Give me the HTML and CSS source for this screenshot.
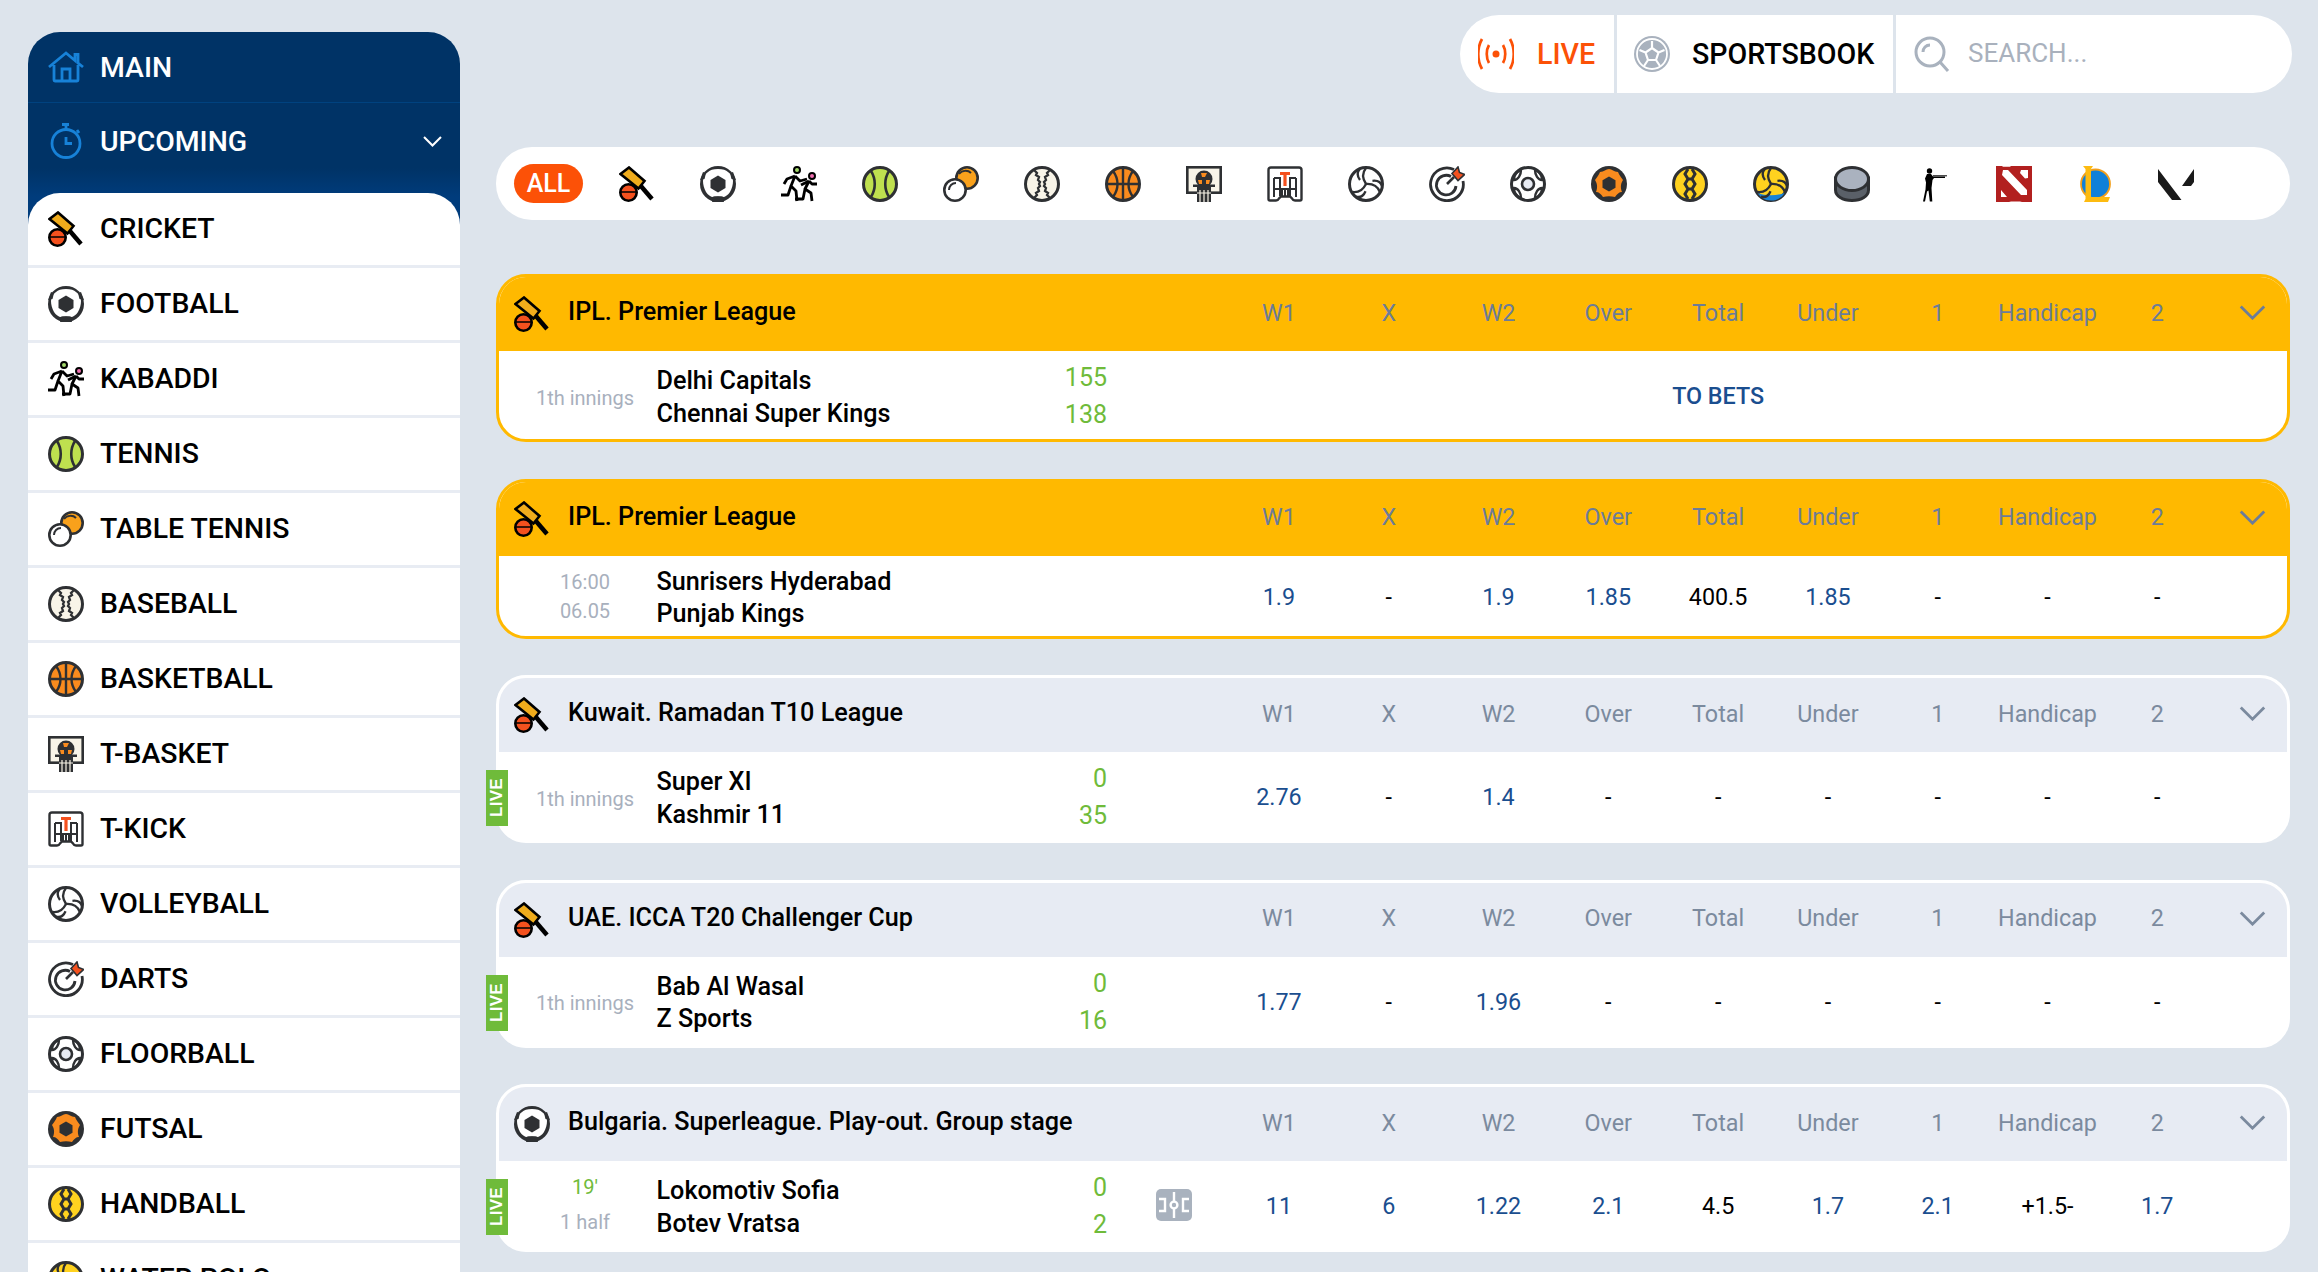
FILE: index.html
```html
<!DOCTYPE html>
<html lang="en">
<head>
<meta charset="utf-8">
<title>Sportsbook</title>
<link rel="stylesheet" href="styles.css">
</head>
<body>
<svg class="defs" width="0" height="0" aria-hidden="true">
  <symbol id="i-cricket" viewBox="0 0 36 36">
    <path d="M33 33 21 19" fill="none" stroke="#000" stroke-width="4.5"/>
    <path d="M10 1.500 25.500 15 19.500 22.500 1.500 8z" fill="#f0ac1c" stroke="#000" stroke-width="2.600"/>
    <circle cx="9.500" cy="26.500" r="8.200" fill="#f4511e" stroke="#000" stroke-width="2.600"/>
    <path d="M2 26h15" stroke="#000" stroke-width="1.500"/>
  </symbol>
  <symbol id="i-football" viewBox="0 0 36 36">
    <circle cx="18" cy="18" r="18" fill="#2e3033"/>
    <path d="M18 3c5 0 8 1 10 3 3 2 5 5 5 9 0 4-1 7-3 11-2 3-4 4-6 5-4-1-8-1-12 0-2-1-4-2-6-5-2-4-3-7-3-11 0-4 2-7 5-9 2-2 5-3 10-3z" fill="#fff"/>
    <path d="M18 9.500 25.500 14V22L18 26.500 10.500 22V14z" fill="#2e3033"/>
    <path d="M12 36l1.500-5.500h9L24 36zM0 14l4.500-1 1.500-6-3-1zM36 14l-4.500-1-1.500-6 3-1z" fill="#2e3033"/>
  </symbol>
  <symbol id="i-kabaddi" viewBox="0 0 36 36">
    <g fill="none" stroke="#000" stroke-width="2.800" stroke-linejoin="round">
      <circle cx="16" cy="4" r="3" fill="#a3d96b" stroke-width="2"/>
      <circle cx="31" cy="10" r="3" fill="#f06fb0" stroke-width="2"/>
      <path d="M14 10 10 20 15 25 16 35M10 20 7 29H0M14 10 6 13 3 18M14 10 19 15 26 13"/>
      <path d="M28 15 24 23 30 27 31 35M24 23 22 33H14M28 15 20 19M28 15 31 18H36"/>
    </g>
  </symbol>
  <symbol id="i-tennis" viewBox="0 0 36 36">
    <circle cx="18" cy="18" r="16.500" fill="#bfe04f" stroke="#2e3033" stroke-width="3"/>
    <path d="M9 5c5 8 5 18 0 26M27 5c-5 8-5 18 0 26" fill="none" stroke="#2e3033" stroke-width="2.600"/>
  </symbol>
  <symbol id="i-tabletennis" viewBox="0 0 36 36">
    <circle cx="24" cy="12" r="10.700" fill="#f9a11b" stroke="#2e3033" stroke-width="2.600"/>
    <path d="M16 8c3-4 9-4 12-1" fill="none" stroke="#2e3033" stroke-width="2"/>
    <circle cx="12" cy="24" r="10.700" fill="#fff" stroke="#2e3033" stroke-width="2.600"/>
    <path d="M6 24c0-4 3-7 7-7" fill="none" stroke="#2e3033" stroke-width="2"/>
  </symbol>
  <symbol id="i-baseball" viewBox="0 0 36 36">
    <circle cx="18" cy="18" r="16.500" fill="#f8f4e8" stroke="#2e3033" stroke-width="3"/>
    <path d="M10 4l3 3-1 2 3 2-1 3 2 2-1 2 1 2-2 2 1 3-3 2 1 2-3 3M26 4l-3 3 1 2-3 2 1 3-2 2 1 2-1 2 2 2-1 3 3 2-1 2 3 3" fill="none" stroke="#2e3033" stroke-width="2.300"/>
  </symbol>
  <symbol id="i-basketball" viewBox="0 0 36 36">
    <circle cx="18" cy="18" r="16.500" fill="#f98b1e" stroke="#2e3033" stroke-width="3"/>
    <path d="M18 2v32M2 18h32M8 5c6 8 6 18 0 26M28 5c-6 8-6 18 0 26" fill="none" stroke="#2e3033" stroke-width="2.400"/>
  </symbol>
  <symbol id="i-tbasket" viewBox="0 0 36 36">
    <rect x="1.300" y="1.300" width="33.400" height="25.400" fill="#f8f4e8" stroke="#2e3033" stroke-width="2.600"/>
    <circle cx="18" cy="13" r="8.500" fill="#2e3033"/>
    <path d="M15 7h6l-2 4h-3zM12 14h4v4h-3zM20 14h4l-1 4h-3z" fill="#f98b1e"/>
    <rect x="7" y="18.500" width="22" height="2.500" fill="#2e3033"/>
    <path d="M11 20h14v16H11z" fill="#2e3033"/>
    <path d="M14 24v12M18 24v12M22 24v12M11 27h14" stroke="#f8f4e8" stroke-width="1.200"/>
  </symbol>
  <symbol id="i-tkick" viewBox="0 0 36 36">
    <path d="M1.500 33V4q0-2.500 2.500-2.500h28q2.500 0 2.500 2.500v29q0 1.500-1.500 1.500h-5q-2 0-3-2l-2-2h-9l-2 2q-1 2-3 2H3q-1.500 0-1.500-1.500z" fill="#fff" stroke="#2e3033" stroke-width="2.400"/>
    <path d="M7 12h6v18M29 12h-6v18M7 12v19M29 12v19M7 23h22M15 24v7M18 24v7M21 24v7" fill="none" stroke="#2e3033" stroke-width="2"/>
    <path d="M13 6h10v3h-3.400v11h-3.200V9H13z" fill="#f4511e"/>
  </symbol>
  <symbol id="i-volleyball" viewBox="0 0 36 36">
    <circle cx="18" cy="18" r="16.500" fill="#fff" stroke="#2e3033" stroke-width="3"/>
    <g fill="none" stroke="#2e3033" stroke-width="2.300">
      <path d="M18 18C14 12 14 7 18 2M12 14C9 10 9 6 12 3"/>
      <path transform="rotate(120 18 18)" d="M18 18C14 12 14 7 18 2M12 14C9 10 9 6 12 3"/>
      <path transform="rotate(240 18 18)" d="M18 18C14 12 14 7 18 2M12 14C9 10 9 6 12 3"/>
    </g>
  </symbol>
  <symbol id="i-darts" viewBox="0 0 36 36">
    <path d="M25 3.500A16.400 16.400 0 1 0 34 15" fill="none" stroke="#2e3033" stroke-width="2.800"/>
    <path d="M22 10.500A9.800 9.800 0 1 0 27 20" fill="none" stroke="#2e3033" stroke-width="2.800"/>
    <path d="M18 18 25 11" stroke="#2e3033" stroke-width="2.600"/>
    <path d="M23 7.500 29 1l1.500 5.500 5 2-6.500 6z" fill="#f4511e" stroke="#2e3033" stroke-width="1.600"/>
  </symbol>
  <symbol id="i-floorball" viewBox="0 0 36 36">
    <circle cx="18" cy="18" r="16.500" fill="#fff" stroke="#2e3033" stroke-width="3"/>
    <circle cx="18" cy="18" r="6" fill="#e7ebf3" stroke="#2e3033" stroke-width="2.600"/>
    <g fill="none" stroke="#2e3033" stroke-width="2.400">
      <path d="M25 4c5 2 7 6 7 10-4 0-7-5-7-10z"/>
      <path d="M11 4c-5 2-7 6-7 10 4 0 7-5 7-10z"/>
      <path d="M25 32c5-2 7-6 7-10-4 0-7 5-7 10z"/>
      <path d="M11 32c-5-2-7-6-7-10 4 0 7 5 7 10z"/>
    </g>
  </symbol>
  <symbol id="i-futsal" viewBox="0 0 36 36">
    <circle cx="18" cy="18" r="18" fill="#2e3033"/>
    <path d="M18 3c3 0 5 3 9 3 1 3 3 5 5 8-2 3-3 7-1 12-3 0-5 2-7 5-4-1-8-1-12 0-2-3-4-5-7-5 2-5 1-9-1-12 2-3 4-5 5-8 4 0 6-3 9-3z" fill="#f98b1e"/>
    <path d="M18 10.500 24.500 14.250V21.750L18 25.500 11.500 21.750V14.250z" fill="#2e3033"/>
  </symbol>
  <symbol id="i-handball" viewBox="0 0 36 36">
    <circle cx="18" cy="18" r="16.500" fill="#ffd21f" stroke="#2e3033" stroke-width="3"/>
    <path d="M13 18l3-5h4l3 5-3 5h-4zM16 13l-3-5 3-5M20 13l3-5-3-5M16 23l-3 5 3 5M20 23l3 5-3 5" fill="none" stroke="#2e3033" stroke-width="3"/>
  </symbol>
  <symbol id="i-waterpolo" viewBox="0 0 36 36">
    <circle cx="18" cy="18" r="16.500" fill="#ffd21f" stroke="#2e3033" stroke-width="3"/>
    <path d="M4.500 27c8 3 19 3 27 0-2 4-7 7.500-13.500 7.500S7 31 4.500 27z" fill="#1782d8"/>
    <g fill="none" stroke="#2e3033" stroke-width="2.300">
      <path d="M18 18C14 12 14 7 18 2M12 14C9 10 9 6 12 3"/>
      <path transform="rotate(120 18 18)" d="M18 18C14 12 14 7 18 2M12 14C9 10 9 6 12 3"/>
      <path transform="rotate(240 18 18)" d="M18 18C14 12 14 7 18 2M12 14C9 10 9 6 12 3"/>
    </g>
  </symbol>
  <symbol id="i-hockey" viewBox="0 0 36 36">
    <path d="M1.500 12v12c0 6 7 10.500 16.500 10.500S34.500 30 34.500 24V12z" fill="#5a6068" stroke="#2e3033" stroke-width="3"/>
    <ellipse cx="18" cy="13" rx="16.500" ry="11.500" fill="#aab2bf" stroke="#2e3033" stroke-width="3"/>
  </symbol>
  <symbol id="i-cs" viewBox="0 0 36 36">
    <circle cx="14.500" cy="5" r="2.700" fill="#000"/>
    <path d="M12 8h4l2 2.500h12v1.500H19l-1.500 2-1 8 .8 13.500H14.800l-1.300-11-1.500 1-2 10H8l2.500-12 .5-7-1-4z" fill="#000"/>
    <path d="M18 9.800h14" stroke="#000" stroke-width="1"/>
  </symbol>
  <symbol id="i-dota" viewBox="0 0 36 36">
    <path d="M0 0h6l1 .7h7l1-.7h21v36H26l-2-.6h-9l-2 .6H0z" fill="#b2201f"/>
    <path d="M7 4h5l19 20v5h-6L6 9z M25 4h7v8l-3 .5-5-5.500zM5 24l6 7H5z" fill="#fff"/>
  </symbol>
  <symbol id="i-lol" viewBox="0 0 36 36">
    <circle cx="18.500" cy="18" r="14.500" fill="#1080d8" stroke="#f29f1b" stroke-width="1.800"/>
    <path d="M6 0h10l-2 3v28h19l-2 5H7l1.500-3V3z" fill="#fdbb10"/>
  </symbol>
  <symbol id="i-val" viewBox="0 0 36 36">
    <path d="M0 3v13l14 18h9.500zM36 3 24 20h9l3-4z" fill="#1a1a1a"/>
  </symbol>
  <symbol id="i-home" viewBox="0 0 36 30">
    <path d="M1 15 18 1l9 7.500V2.500h3v8.500l5 4M6 13v15q0 1 1 1h22q1 0 1-1V13M14 29V17h8v12" fill="none" stroke="#1782d8" stroke-width="2.800"/>
  </symbol>
  <symbol id="i-timer" viewBox="0 0 32 36">
    <path d="M12 1.500h7M16 1.500v5M27 7l2 3" fill="none" stroke="#1782d8" stroke-width="2.800"/>
    <circle cx="16" cy="20.500" r="14" fill="none" stroke="#1782d8" stroke-width="2.800"/>
    <path d="M16 14v6.500h6" fill="none" stroke="#1782d8" stroke-width="2.800"/>
  </symbol>
  <symbol id="i-live" viewBox="0 0 36 36">
    <circle cx="18" cy="18" r="3.500" fill="#fc5107"/>
    <path d="M11 9c-3 5-3 13 0 18M25 9c3 5 3 13 0 18M4 3c-5 9-5 21 0 30M32 3c5 9 5 21 0 30" fill="none" stroke="#fc5107" stroke-width="2.700"/>
  </symbol>
  <symbol id="i-ball" viewBox="0 0 36 36">
    <circle cx="18" cy="18" r="18" fill="#a9b2be"/>
    <path d="M18 12 24.500 16.500 22 24H14L11.500 16.500zM18 12V5M24.500 16.500l6-2.500M22 24l4 6M14 24l-4 6M11.500 16.500l-6-2.500" fill="#a9b2be" stroke="#fff" stroke-width="2.200"/>
    <circle cx="18" cy="18" r="15" fill="none" stroke="#fff" stroke-width="1.800"/>
  </symbol>
  <symbol id="i-search" viewBox="0 0 36 36">
    <circle cx="16" cy="16" r="14" fill="none" stroke="#a9b2be" stroke-width="3"/>
    <path d="M9 16c0-4 3-7 7-7M26 26l8 9" fill="none" stroke="#a9b2be" stroke-width="3"/>
  </symbol>
  <symbol id="i-field" viewBox="0 0 36 32">
    <rect width="36" height="32" rx="5" fill="#a9b2be"/>
    <path d="M18 3v26M3 10h6v12H3M33 10h-6v12h6" fill="none" stroke="#fff" stroke-width="2.400"/>
    <circle cx="18" cy="16" r="3.400" fill="#a9b2be" stroke="#fff" stroke-width="2.400"/>
  </symbol>
  <symbol id="i-chev" viewBox="0 0 28 16">
    <path d="M1.500 1.500 14 14 26.500 1.500" fill="none" stroke="currentColor" stroke-width="3"/>
  </symbol>
</svg>

<div class="page">
  <aside class="sidebar">
    <div class="nav-row nav-main"><svg class="ico"><use href="#i-home"/></svg><span class="nav-label">MAIN</span></div>
    <div class="nav-row nav-up"><svg class="ico"><use href="#i-timer"/></svg><span class="nav-label">UPCOMING</span><svg class="nav-chev"><use href="#i-chev"/></svg></div>
    <ul class="sports">
      <li><svg class="ico"><use href="#i-cricket"/></svg><span>CRICKET</span></li>
      <li><svg class="ico"><use href="#i-football"/></svg><span>FOOTBALL</span></li>
      <li><svg class="ico"><use href="#i-kabaddi"/></svg><span>KABADDI</span></li>
      <li><svg class="ico"><use href="#i-tennis"/></svg><span>TENNIS</span></li>
      <li><svg class="ico"><use href="#i-tabletennis"/></svg><span>TABLE TENNIS</span></li>
      <li><svg class="ico"><use href="#i-baseball"/></svg><span>BASEBALL</span></li>
      <li><svg class="ico"><use href="#i-basketball"/></svg><span>BASKETBALL</span></li>
      <li><svg class="ico"><use href="#i-tbasket"/></svg><span>T-BASKET</span></li>
      <li><svg class="ico"><use href="#i-tkick"/></svg><span>T-KICK</span></li>
      <li><svg class="ico"><use href="#i-volleyball"/></svg><span>VOLLEYBALL</span></li>
      <li><svg class="ico"><use href="#i-darts"/></svg><span>DARTS</span></li>
      <li><svg class="ico"><use href="#i-floorball"/></svg><span>FLOORBALL</span></li>
      <li><svg class="ico"><use href="#i-futsal"/></svg><span>FUTSAL</span></li>
      <li><svg class="ico"><use href="#i-handball"/></svg><span>HANDBALL</span></li>
      <li><svg class="ico"><use href="#i-waterpolo"/></svg><span>WATER POLO</span></li>
    </ul>
  </aside>

  <main class="main">
    <div class="topbar">
      <div class="top-live"><svg class="ico"><use href="#i-live"/></svg><span>LIVE</span></div>
      <div class="top-book"><svg class="ico"><use href="#i-ball"/></svg><span>SPORTSBOOK</span></div>
      <div class="top-search"><svg class="ico"><use href="#i-search"/></svg><span>SEARCH...</span></div>
    </div>

    <div class="filters">
      <span class="all">ALL</span>
      <svg class="ico"><use href="#i-cricket"/></svg>
      <svg class="ico"><use href="#i-football"/></svg>
      <svg class="ico"><use href="#i-kabaddi"/></svg>
      <svg class="ico"><use href="#i-tennis"/></svg>
      <svg class="ico"><use href="#i-tabletennis"/></svg>
      <svg class="ico"><use href="#i-baseball"/></svg>
      <svg class="ico"><use href="#i-basketball"/></svg>
      <svg class="ico"><use href="#i-tbasket"/></svg>
      <svg class="ico"><use href="#i-tkick"/></svg>
      <svg class="ico"><use href="#i-volleyball"/></svg>
      <svg class="ico"><use href="#i-darts"/></svg>
      <svg class="ico"><use href="#i-floorball"/></svg>
      <svg class="ico"><use href="#i-futsal"/></svg>
      <svg class="ico"><use href="#i-handball"/></svg>
      <svg class="ico"><use href="#i-waterpolo"/></svg>
      <svg class="ico"><use href="#i-hockey"/></svg>
      <svg class="ico"><use href="#i-cs"/></svg>
      <svg class="ico"><use href="#i-dota"/></svg>
      <svg class="ico"><use href="#i-lol"/></svg>
      <svg class="ico"><use href="#i-val"/></svg>
    </div>

    <section class="card card-hot">
      <header class="head"><svg class="ico"><use href="#i-cricket"/></svg><h2>IPL. Premier League</h2>
        <div class="cols"><span>W1</span><span>X</span><span>W2</span><span>Over</span><span>Total</span><span>Under</span><span>1</span><span>Handicap</span><span>2</span></div>
        <svg class="chev"><use href="#i-chev"/></svg></header>
      <div class="match">
        <div class="time time-one">1th innings</div>
        <div class="teams"><div>Delhi Capitals</div><div>Chennai Super Kings</div></div>
        <div class="score"><div>155</div><div>138</div></div>
        <div class="field-slot"></div>
        <div class="cols odds"><a class="to-bets">TO BETS</a></div>
        <div class="chev-slot"></div>
      </div>
    </section>

    <section class="card card-hot card-short">
      <header class="head"><svg class="ico"><use href="#i-cricket"/></svg><h2>IPL. Premier League</h2>
        <div class="cols"><span>W1</span><span>X</span><span>W2</span><span>Over</span><span>Total</span><span>Under</span><span>1</span><span>Handicap</span><span>2</span></div>
        <svg class="chev"><use href="#i-chev"/></svg></header>
      <div class="match">
        <div class="time"><div>16:00</div><div>06.05</div></div>
        <div class="teams"><div>Sunrisers Hyderabad</div><div>Punjab Kings</div></div>
        <div class="score"></div>
        <div class="field-slot"></div>
        <div class="cols odds"><span class="o">1.9</span><span>-</span><span class="o">1.9</span><span class="o">1.85</span><span>400.5</span><span class="o">1.85</span><span>-</span><span>-</span><span>-</span></div>
        <div class="chev-slot"></div>
      </div>
    </section>

    <section class="card">
      <header class="head"><svg class="ico"><use href="#i-cricket"/></svg><h2>Kuwait. Ramadan T10 League</h2>
        <div class="cols"><span>W1</span><span>X</span><span>W2</span><span>Over</span><span>Total</span><span>Under</span><span>1</span><span>Handicap</span><span>2</span></div>
        <svg class="chev"><use href="#i-chev"/></svg></header>
      <div class="match">
        <b class="live">LIVE</b>
        <div class="time time-one">1th innings</div>
        <div class="teams"><div>Super XI</div><div>Kashmir 11</div></div>
        <div class="score"><div>0</div><div>35</div></div>
        <div class="field-slot"></div>
        <div class="cols odds"><span class="o">2.76</span><span>-</span><span class="o">1.4</span><span>-</span><span>-</span><span>-</span><span>-</span><span>-</span><span>-</span></div>
        <div class="chev-slot"></div>
      </div>
    </section>

    <section class="card">
      <header class="head"><svg class="ico"><use href="#i-cricket"/></svg><h2>UAE. ICCA T20 Challenger Cup</h2>
        <div class="cols"><span>W1</span><span>X</span><span>W2</span><span>Over</span><span>Total</span><span>Under</span><span>1</span><span>Handicap</span><span>2</span></div>
        <svg class="chev"><use href="#i-chev"/></svg></header>
      <div class="match">
        <b class="live">LIVE</b>
        <div class="time time-one">1th innings</div>
        <div class="teams"><div>Bab Al Wasal</div><div>Z Sports</div></div>
        <div class="score"><div>0</div><div>16</div></div>
        <div class="field-slot"></div>
        <div class="cols odds"><span class="o">1.77</span><span>-</span><span class="o">1.96</span><span>-</span><span>-</span><span>-</span><span>-</span><span>-</span><span>-</span></div>
        <div class="chev-slot"></div>
      </div>
    </section>

    <section class="card">
      <header class="head"><svg class="ico"><use href="#i-football"/></svg><h2>Bulgaria. Superleague. Play-out. Group stage</h2>
        <div class="cols"><span>W1</span><span>X</span><span>W2</span><span>Over</span><span>Total</span><span>Under</span><span>1</span><span>Handicap</span><span>2</span></div>
        <svg class="chev"><use href="#i-chev"/></svg></header>
      <div class="match">
        <b class="live">LIVE</b>
        <div class="time time-live"><div class="minute">19'</div><div>1 half</div></div>
        <div class="teams"><div>Lokomotiv Sofia</div><div>Botev Vratsa</div></div>
        <div class="score"><div>0</div><div>2</div></div>
        <div class="field-slot"><svg class="field"><use href="#i-field"/></svg></div>
        <div class="cols odds"><span class="o">11</span><span class="o">6</span><span class="o">1.22</span><span class="o">2.1</span><span>4.5</span><span class="o">1.7</span><span class="o">2.1</span><span>+1.5-</span><span class="o">1.7</span></div>
        <div class="chev-slot"></div>
      </div>
    </section>
  </main>
</div>
</body>
</html>
```

FILE: styles.css
```css
* { box-sizing: border-box; }
html, body { margin: 0; height: 100%; overflow: hidden; }
body {
  background: #dde4ec;
  color: #000;
  font-family: Roboto, "Liberation Sans", sans-serif;
}
.defs { position: absolute; }
.ico { width: 36px; height: 36px; flex: none; display: block; }

.page { display: flex; align-items: flex-start; padding-left: 28px; height: 1272px; overflow: hidden; }

/* Sidebar */
.sidebar {
  width: 432px;
  flex: none;
  margin-top: 32px;
  border-radius: 32px 32px 0 0;
  background: linear-gradient(#003366 0, #003366 136px, #003c7c 165px);
  color: #fff;
}
.nav-row { display: flex; align-items: center; padding-left: 20px; font-size: 28.4px; font-weight: 500; }
.nav-row .ico { margin-right: 16px; }
.nav-main { height: 71px; border-bottom: 1px solid #00427f; }
.nav-up { height: 76px; margin-bottom: 14px; }
.nav-chev { width: 19px; height: 11px; margin-left: auto; margin-right: 18px; color: #fff; }
.sports { list-style: none; margin: 0; padding: 0; background: #fff; border-radius: 32px 32px 0 0; color: #000; }
.sports li {
  display: flex; align-items: center;
  height: 75px; padding-left: 20px;
  border-bottom: 3px solid #e8ecf3;
  font-size: 28.4px; font-weight: 500;
}
.sports li .ico { margin-right: 16px; }
.sports li span { padding-bottom: 2px; }

/* Main column */
.main { width: 1794px; margin-left: 36px; padding-top: 15px; flex: none; }

.topbar {
  display: flex;
  width: 832px; height: 78px;
  margin-left: auto; margin-right: -2px;
  background: #fff;
  border-radius: 39px;
  overflow: hidden;
  font-size: 28.6px; font-weight: 500;
}
.topbar > div { display: flex; align-items: center; }
.top-live { width: 157px; padding-left: 18px; color: #fc5107; border-right: 3px solid #dde4ec; }
.top-live .ico { margin-right: 23px; }
.top-book { width: 279px; padding-left: 17px; border-right: 3px solid #dde4ec; }
.top-book .ico { margin-right: 22px; }
.top-search { flex: 1; padding-left: 18px; color: #a9b1bd; font-weight: 400; font-size: 26px; }
.top-search span { padding-bottom: 2px; }
.top-search .ico { margin-right: 18px; }

.filters {
  display: flex; align-items: center;
  height: 73px;
  margin-top: 54px;
  padding-left: 18px;
  gap: 45px;
  background: #fff;
  border-radius: 36px;
}
.all {
  width: 69px; height: 39px; margin-right: -9px;
  display: flex; align-items: center; justify-content: center;
  background: #fc5107; color: #fff;
  border-radius: 20px;
  font-size: 25px; font-weight: 500;
}

/* Cards */
.card {
  margin-top: 36.5px;
  height: 168px;
  border: 3px solid #fff;
  border-radius: 30px;
  background: #fff;
}
.filters + .card { margin-top: 54px; }
.card-short { height: 160px; }
.card-hot { border-color: #ffb900; }
.head {
  display: flex; align-items: center;
  height: 74px;
  padding-left: 15px;
  background: #e7ebf3;
  border-radius: 27px 27px 0 0;
  color: #7b8a9e;
}
.card-hot .head { background: #ffb900; color: #6c7c98; }
.head h2 { flex: 1; margin: 0 0 0 18px; padding-bottom: 5px; color: #000; font-size: 25.2px; font-weight: 500; white-space: nowrap; }
.cols { display: grid; grid-template-columns: repeat(9, 109.8px); width: 988.2px; flex: none; text-align: center; font-size: 23.3px; }
.head .cols { padding-bottom: 3px; }
.chev { width: 27px; height: 15px; margin: 0 21px 3px 26.8px; flex: none; }

.match { position: relative; display: flex; align-items: center; height: 88px; border-radius: 0 0 27px 27px; }
.card-short .match { height: 80px; }
.time { width: 120px; margin-left: 26px; flex: none; padding-top: 3px; text-align: center; font-size: 20px; line-height: 29px; color: #a8b0bd; }
.time-one { padding-top: 6px; }
.time-live { padding-top: 0; line-height: 35px; }
.minute { color: #6fbb3a; }
.teams { flex: 1; margin-left: 11.5px; padding-top: 5px; font-size: 25.2px; font-weight: 500; line-height: 32.5px; white-space: nowrap; }
.score { width: 60px; flex: none; padding-top: 2px; text-align: right; color: #6fbb3a; font-size: 25px; line-height: 37px; }
.field-slot { width: 117px; flex: none; padding-left: 49px; }
.field { display: block; width: 36px; height: 32px; }
.odds { color: #000; padding-top: 2px; }
.odds .o, .to-bets { color: #1a4e8f; }
.to-bets { grid-column: 1 / -1; font-weight: 500; }
.chev-slot { width: 74.8px; flex: none; }
.live {
  position: absolute; left: -13px; top: 18px;
  width: 22px; height: 56px;
  display: flex; align-items: center; justify-content: center;
  background: #6fbb3a; color: #fff;
  writing-mode: vertical-rl; transform: rotate(180deg);
  font: 700 17px "Liberation Sans", sans-serif;
  letter-spacing: .3px;
}
```
